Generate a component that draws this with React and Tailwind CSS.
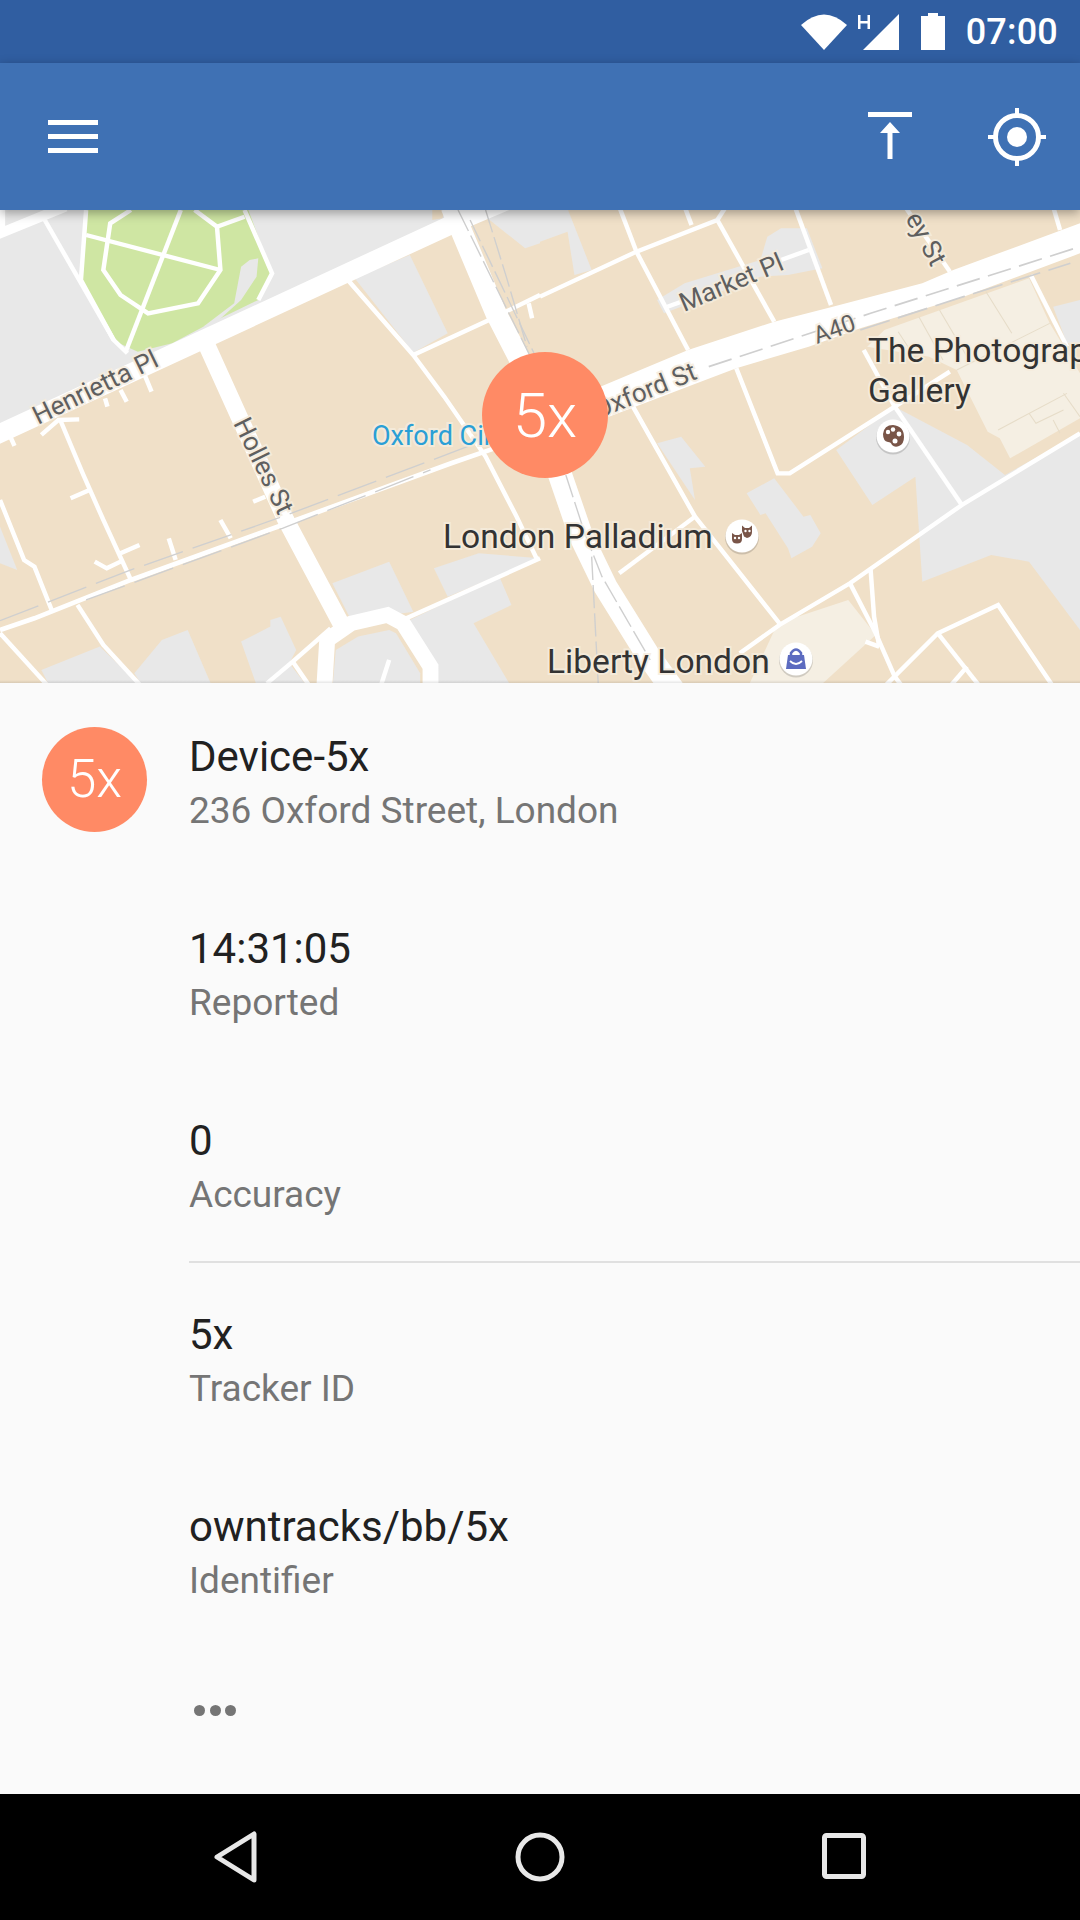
const TAN = "#f0e0c8";
const GRAY = "#e8e8e8";

// traced map shapes, in zoomed-crop units; the two groups below scale them back
const leftGray = [
  "0,0 1290,0 1330,80 0,710",
  "1030,235 1190,165 1300,400 1200,458",
  "1405,0 1568,0 1568,130 1525,145 1410,50",
  "0,980 50,1110 0,1090",
  "965,1150 1130,1085 1200,1235 1020,1262",
  "1260,1105 1390,1060 1568,1075 1300,1190",
  "1190,1260 1450,1130 1485,1215 1375,1270 1490,1470 1280,1470 1240,1380",
  "120,1410 290,1340 420,1470 150,1470",
  "390,1420 470,1320 545,1290 620,1470 420,1470",
  "700,1325 785,1280 785,1260 815,1250 860,1350 840,1390 900,1470 750,1470",
  "975,1350 1040,1310 1130,1290 1150,1300 1220,1420 1220,1470 965,1470",
];

const leftThin = [
  "130,60 330,420 370,460",
  "710,30 790,220 750,300",
  "250,30 235,240 330,420",
  "380,30 320,70 300,210 350,285 430,340 575,310 640,210 630,80 565,30",
  "250,105 640,210",
  "525,30 365,455",
  "630,80 710,50",
  "1010,240 1200,465 1290,590 1410,770 1500,950 1560,1080",
  "1200,465 1420,360 1568,285",
  "1535,310 1545,355",
  "175,660 240,820 300,960 380,1140",
  "120,705 170,660 230,658",
  "0,900 70,1080 100,1100 150,1230",
  "205,895 260,870",
  "350,1060 405,1035",
  "275,1085 310,1105 350,1085",
  "490,1015 510,1080",
  "640,960 670,1015",
  "735,905 770,890",
  "30,710 42,738",
  "305,595 312,620",
  "350,570 368,605",
  "420,525 440,575",
  "225,1215 300,1335 420,1470",
  "0,1300 150,1470",
  "775,1450 850,1385 960,1285",
  "850,1385 900,1460",
  "1180,1255 1568,1075",
  "1130,1380 1105,1460",
];

const rightGray = [
  "0,0 70,0 150,210 100,225 80,95 0,125",
  "340,300 360,340 640,230 720,225 820,205 775,85 700,85 660,110 640,180 420,250",
  "860,750 1030,620 1240,735 1350,825 1568,700 1568,1290 1420,1085 1310,1065 1110,1145 1090,830 965,915",
  "1490,320 1568,300 1568,430 1530,430",
  "340,730 410,710 480,800 435,805 450,900",
  "600,880 680,835 765,950 785,945 815,1000 790,1040 730,1075 720,1045 655,940 640,945",
];

const rightThin = [
  "0,290 280,155 515,60 540,20",
  "230,20 280,155 430,450",
  "420,20 440,75",
  "515,60 680,365",
  "740,20 845,315",
  "370,320 410,305",
  "700,180 780,150",
  "570,505 690,820 725,820 1030,620 1190,515",
  "1030,620 1225,915",
  "230,1120 450,950",
  "270,620 450,950 695,1270",
  "580,1360 695,1275 900,1150 1225,915 1568,700",
  "900,1150 975,1300 1030,1430 1060,1470",
  "960,1110 970,1250 985,1340",
  "945,1325 985,1340",
  "1000,1460 1155,1300 1330,1215 1490,1460",
  "1155,1300 1285,1470",
  "1190,1460 1240,1400",
  "1425,225 1530,440",
  "940,450 1030,620",
  "1490,20 1510,90",
  "1060,20 1190,215",
];

const buildingLines = [
  "1040,395 1100,490",
  "1100,350 1170,480",
  "1160,330 1240,470",
  "1295,275 1370,400",
  "1210,510 1480,370",
  "1330,690 1530,580",
  "1420,640 1440,670 1520,630",
  "1490,660 1510,700",
  "1520,580 1568,650",
];

function StatusBar() {
  return (
    <div className="h-[63px] shrink-0 bg-[#305ea1] flex items-center justify-end pr-[22px] text-white">
      <svg width="46" height="36" viewBox="0 0 46 36" className="mr-[11px]">
        <path d="M0 11 Q23 -10 46 11 L23 36 Z" fill="#fff" />
      </svg>
      <svg width="42" height="36" viewBox="0 0 42 36" className="mr-[21px]">
        <path d="M0 1H2.500V7H9.500V1H12V15H9.500V9.500H2.500V15H0Z M41 0V36H5Z" fill="#fff" />
      </svg>
      <svg width="24" height="37" viewBox="0 0 24 37" className="mr-[21px]">
        <path d="M7 0H17V3H24V37H0V3H7Z" fill="#fff" />
      </svg>
      <span className="text-[36px] leading-none font-medium tracking-[0.2px]">07:00</span>
    </div>
  );
}

function AppBar() {
  return (
    <header className="relative z-10 h-[147px] shrink-0 bg-[#3f71b4] shadow-[0_3px_10px_rgba(0,0,0,0.35)] flex items-center justify-between pl-[48px] pr-[34px]">
      <div className="flex flex-col gap-[9px]">
        <span className="block w-[50px] h-[5px] bg-white" />
        <span className="block w-[50px] h-[5px] bg-white" />
        <span className="block w-[50px] h-[5px] bg-white" />
      </div>
      <div className="flex items-center gap-[76px]">
        <svg width="44" height="50" viewBox="0 0 44 50">
          <path d="M0 0H44V5H0Z M19.500 21H12L22 10L32 21H24.500V47H19.500Z" fill="#fff" />
        </svg>
        <svg width="58" height="58" viewBox="0 0 58 58" fill="none">
          <circle cx="29" cy="29" r="21.500" stroke="#fff" strokeWidth="5" />
          <circle cx="29" cy="29" r="10" fill="#fff" />
          <path d="M29 0V8 M29 50V58 M0 29H8 M50 29H58" stroke="#fff" strokeWidth="4" />
        </svg>
      </div>
    </header>
  );
}

function MapLabel({ x, y, rotate = 0, size = 26, fill = "#5f5f5f", halo = "#f5ecdd", children }) {
  return (
    <text
      x={x}
      y={y}
      transform={`rotate(${rotate} ${x} ${y})`}
      fontFamily="Roboto, sans-serif"
      fontSize={size}
      fill={fill}
      stroke={halo}
      strokeWidth="4"
      strokeOpacity="0.85"
      paintOrder="stroke"
    >
      {children}
    </text>
  );
}

function Poi({ cx, cy, children }) {
  return (
    <g>
      <circle cx={cx} cy={cy + 1.5} r="17" fill="#000" opacity="0.15" />
      <circle cx={cx} cy={cy} r="16.500" fill="#fff" />
      {children}
    </g>
  );
}

function MapView() {
  return (
    <div className="relative h-[473px] shrink-0 overflow-hidden">
      <svg width="1080" height="473" viewBox="0 210 1080 473" className="block">
        <rect x="0" y="210" width="1080" height="473" fill={TAN} />

        <g transform="translate(540 200) scale(0.3444 0.3333)">
          {rightGray.map((p) => (
            <polygon key={p} points={p} fill={GRAY} />
          ))}
          <polygon
            points="1000,390 1420,235 1480,370 1568,520 1568,655 1365,775 1335,715 1300,695 1210,510 1130,470 950,440"
            fill="#f5efe3"
          />
          <polygon points="690,1270 895,1200 975,1305 800,1470 600,1470" fill="#f5efe3" />
          {buildingLines.map((p) => (
            <polyline key={p} points={p} fill="none" stroke="#e6dcc8" strokeWidth="3" />
          ))}
          {rightThin.map((p) => (
            <polyline key={p} points={p} fill="none" stroke="#fff" strokeWidth="13" />
          ))}
          <polygon
            points="175,560 430,450 680,365 850,320 1110,250 1200,210 1568,70 1568,160 1230,290 930,385 780,440 570,505 480,540 200,650"
            fill="#fff"
          />
          <polyline points="50,800 120,1010 190,1160 310,1360 400,1490" fill="none" stroke="#fff" strokeWidth="70" />
          <polyline points="490,500 960,340 1568,140" fill="none" stroke="#cfcfcf" strokeWidth="5" strokeDasharray="70 25" />
          <polyline points="930,390 1230,290 1540,190" fill="none" stroke="#cfcfcf" strokeWidth="5" strokeDasharray="90 25" />
          <polyline points="75,825 130,1000 180,1130 320,1380" fill="none" stroke="#cfcfcf" strokeWidth="4" strokeDasharray="70 15" />
          <polyline points="150,1070 170,1470" fill="none" stroke="#cfcfcf" strokeWidth="4" strokeDasharray="70 15" />
        </g>

        <g transform="translate(0 200) scale(0.3444 0.3333)">
          {leftGray.map((p) => (
            <polygon key={p} points={p} fill={GRAY} />
          ))}
          <polygon
            points="250,0 235,240 325,420 400,455 500,430 600,375 750,300 790,220 710,0"
            fill="#cfe6a3"
          />
          <polygon points="725,180 750,175 745,230 700,300 625,370 590,380 680,310 700,200" fill={GRAY} />
          <polygon points="1255,30 1290,30 1285,55 1255,60" fill={TAN} />
          {leftThin.map((p) => (
            <polyline key={p} points={p} fill="none" stroke="#fff" strokeWidth="13" />
          ))}
          <polyline points="0,0 0,100 190,20" fill="none" stroke="#fff" strokeWidth="30" />
          <polyline points="-20,710 1340,60 1500,-10" fill="none" stroke="#fff" strokeWidth="56" />
          <polyline points="598,430 830,960 1000,1290" fill="none" stroke="#fff" strokeWidth="50" />
          <polyline points="1310,20 1440,340 1515,490" fill="none" stroke="#fff" strokeWidth="62" />
          <polyline
            points="940,1490 950,1320 1020,1270 1125,1245 1170,1270 1250,1400 1250,1490"
            fill="none"
            stroke="#fff"
            strokeWidth="46"
          />
          <polyline points="0,1290 100,1255 380,1140 820,975 1310,790 1450,740" fill="none" stroke="#fff" strokeWidth="14" />
          <polyline points="0,1262 380,1110 820,950 1370,735" fill="none" stroke="#cfcfcf" strokeWidth="4" strokeDasharray="120 30" />
          <polyline points="250,1200 820,985 1250,810" fill="none" stroke="#cfcfcf" strokeWidth="4" strokeDasharray="120 30" />
          <polyline points="1330,30 1540,470" fill="none" stroke="#cfcfcf" strokeWidth="4" strokeDasharray="70 15" />
          <polyline points="1365,60 1560,480" fill="none" stroke="#cfcfcf" strokeWidth="4" strokeDasharray="70 15" />
          <polyline points="1410,30 1470,230 1530,440" fill="none" stroke="#cfcfcf" strokeWidth="4" strokeDasharray="70 15" />
        </g>

        <MapLabel x={38} y={425} rotate={-26}>Henrietta Pl</MapLabel>
        <MapLabel x={233} y={423} rotate={64}>Holles St</MapLabel>
        <MapLabel x={684} y={312} rotate={-23}>Market Pl</MapLabel>
        <MapLabel x={598} y={419} rotate={-22}>Oxford St</MapLabel>
        <MapLabel x={817} y={344} rotate={-20} size={24}>A40</MapLabel>
        <MapLabel x={905} y={218} rotate={62}>ey St</MapLabel>
        <MapLabel x={372} y={445} size={27} fill="#2a9fd6">Oxford Circus</MapLabel>
        <MapLabel x={443} y={548} size={33.600} fill="#333">London Palladium</MapLabel>
        <MapLabel x={868} y={362} size={33.600} fill="#333">The Photographer's</MapLabel>
        <MapLabel x={868} y={402} size={33.600} fill="#333">Gallery</MapLabel>
        <MapLabel x={547} y={673} size={33.600} fill="#333">Liberty London</MapLabel>

        <Poi cx={742} cy={536}>
          <path d="M742 525.500L745 528H749L752 525.500V532Q752 537 747 538L744 536.500L742 531Z" fill="#795548" />
          <path d="M732 533L735 535H739L742 533V539Q742 543.500 737 543.500Q732 543.500 732 539Z" fill="#795548" />
          <circle cx="735" cy="538" r="1.200" fill="#fff" />
          <circle cx="739" cy="538" r="1.200" fill="#fff" />
          <circle cx="745.500" cy="531" r="1.200" fill="#fff" />
          <circle cx="749.500" cy="531" r="1.200" fill="#fff" />
        </Poi>
        <Poi cx={893} cy={436}>
          <path d="M883 434Q884 425 893 425Q904 426 904 437Q904 444 899 446Q895 448 892 445Q891 442 888 442Q883 441 883 434Z" fill="#795548" />
          <circle cx="888" cy="432" r="2.200" fill="#fff" />
          <circle cx="893" cy="429.500" r="2.200" fill="#fff" />
          <circle cx="899" cy="434" r="2.400" fill="#fff" />
          <circle cx="895" cy="441" r="2.500" fill="#fff" />
        </Poi>
        <Poi cx={796} cy={659}>
          <path d="M788 655H804L806 669H786Z" fill="#5c6bc0" />
          <path d="M791 656V653Q796 646 801 653V656" fill="none" stroke="#5c6bc0" strokeWidth="2.500" />
          <path d="M790 661Q796 667 802 661" fill="none" stroke="#fff" strokeWidth="1.800" />
        </Poi>
      </svg>

      <div className="absolute left-[482px] top-[142px] w-[126px] h-[126px] rounded-full bg-[#ff8a65] flex items-center justify-center text-white text-[62px] font-light">
        5x
      </div>
      <div className="absolute inset-x-0 bottom-0 h-[3px] bg-gradient-to-t from-black/10 to-transparent" />
    </div>
  );
}

function Row({ title, subtitle, className = "" }) {
  return (
    <div className={className}>
      <div className="text-[42px] leading-[52px] text-[#212121]">{title}</div>
      <div className="text-[37px] leading-[56px] text-[#757575]">{subtitle}</div>
    </div>
  );
}

function Details() {
  return (
    <main className="flex-1 bg-[#fafafa] relative pl-[189px] pt-[48px]">
      <div className="absolute left-[42px] top-[44px] w-[105px] h-[105px] rounded-full bg-[#ff8a65] flex items-center justify-center text-white text-[53px] font-light">
        5x
      </div>
      <Row title="Device-5x" subtitle="236 Oxford Street, London" />
      <Row title="14:31:05" subtitle="Reported" className="mt-[84px]" />
      <Row title="0" subtitle="Accuracy" className="mt-[84px]" />
      <div className="h-[2px] bg-[#e0e0e0] mt-[38px]" />
      <Row title="5x" subtitle="Tracker ID" className="mt-[46px]" />
      <Row title="owntracks/bb/5x" subtitle="Identifier" className="mt-[84px]" />
      <div className="flex gap-[4.500px] mt-[96px] pl-[5px]">
        <span className="block w-[11px] h-[11px] rounded-full bg-[#757575]" />
        <span className="block w-[11px] h-[11px] rounded-full bg-[#757575]" />
        <span className="block w-[11px] h-[11px] rounded-full bg-[#757575]" />
      </div>
    </main>
  );
}

function NavBar() {
  return (
    <nav className="h-[126px] shrink-0 bg-black flex items-center pl-[212px] gap-[258px]">
      <svg width="48" height="52" viewBox="0 0 48 52" fill="none">
        <path d="M42 3V49L5 26Z" stroke="#e8e8e8" strokeWidth="5" strokeLinejoin="round" />
      </svg>
      <svg width="50" height="50" viewBox="0 0 50 50" fill="none" className="-ml-[3px]">
        <circle cx="25" cy="25" r="22" stroke="#e8e8e8" strokeWidth="5" />
      </svg>
      <svg width="44" height="46" viewBox="0 0 44 46" fill="none" className="-ml-[1px] -mt-[2px]">
        <rect x="2.500" y="2.500" width="39" height="41" rx="2" stroke="#e8e8e8" strokeWidth="5" />
      </svg>
    </nav>
  );
}

export default function App() {
  return (
    <div className="w-[1080px] h-[1920px] flex flex-col overflow-hidden [font-family:Roboto,sans-serif]">
      <StatusBar />
      <AppBar />
      <MapView />
      <Details />
      <NavBar />
    </div>
  );
}
